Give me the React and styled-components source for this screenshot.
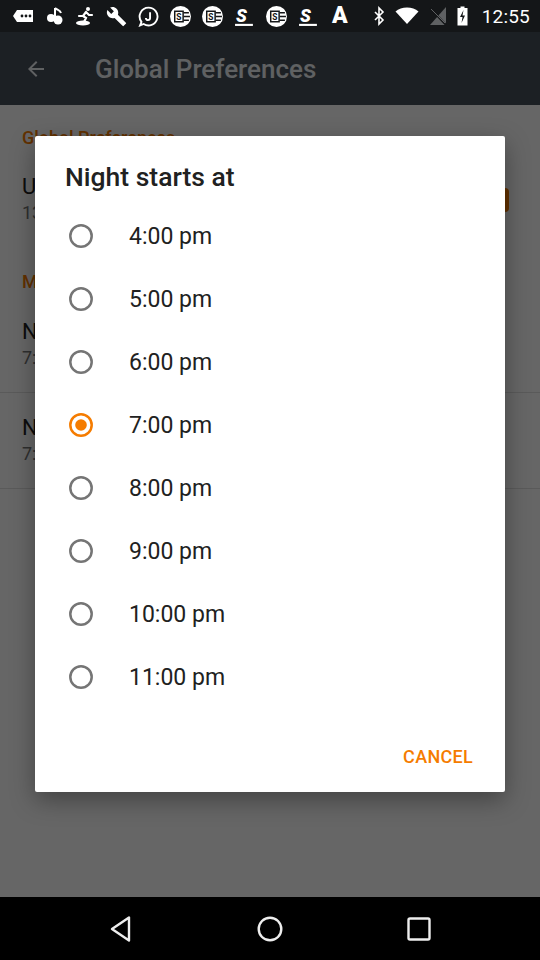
import React from "react";
import styled, { createGlobalStyle } from "styled-components";

const GlobalStyle = createGlobalStyle`
  html, body { margin: 0; padding: 0; background: #000; }
  body { font-family: Roboto, "Noto Sans", "Liberation Sans", sans-serif; }
  * { box-sizing: border-box; }
`;

const ORANGE = "#f57c00";

const Page = styled.div`
  position: relative;
  width: 540px;
  height: 960px;
  display: flex;
  flex-direction: column;
  overflow: hidden;
  background: #fff;
`;

const StatusBar = styled.div`
  height: 32px;
  background: #141618;
  display: flex;
  align-items: center;
  padding: 0 10px 0 13px;
  color: #fff;
  flex-shrink: 0;
`;

const StatusIcons = styled.div`
  display: flex;
  align-items: center;
  gap: 11px;
  flex: 1;
`;

const LetterIcon = styled.span`
  font-size: 23px;
  line-height: 24px;
  font-weight: 900;
  color: #fff;
  padding: 0 2px;
`;

const SysIcons = styled.div`
  display: flex;
  align-items: center;
  gap: 10px;
`;

const Clock = styled.span`
  font-size: 19px;
  font-weight: 400;
  color: #fff;
  margin-left: 4px;
  letter-spacing: 0.2px;
`;

const Main = styled.div`
  position: relative;
  flex: 1;
  display: flex;
  flex-direction: column;
`;

const AppBar = styled.div`
  height: 73px;
  background: #48505a;
  display: flex;
  align-items: center;
  padding-left: 24px;
  gap: 47px;
  flex-shrink: 0;
`;

const AppTitle = styled.div`
  font-size: 26px;
  font-weight: 500;
  color: #eef2f6;
`;

const Content = styled.div`
  flex: 1;
  background: #fff;
  display: flex;
  flex-direction: column;
`;

const SectionHeader = styled.div`
  padding: ${(p) => p.$top}px 22px 0;
  height: ${(p) => p.$h}px;
  font-size: 18px;
  line-height: 22px;
  font-weight: 500;
  color: ${ORANGE};
`;

const Item = styled.div`
  position: relative;
  padding: ${(p) => p.$top}px 22px 0;
  height: ${(p) => p.$h}px;
  border-bottom: ${(p) => (p.$divider ? "1px solid #e0e0e0" : "none")};
`;

const ItemTitle = styled.div`
  font-size: 22px;
  line-height: 24px;
  color: #212121;
`;

const ItemSub = styled.div`
  margin-top: 2px;
  font-size: 18px;
  line-height: 24px;
  color: #757575;
`;

const Check = styled.div`
  position: absolute;
  right: 31px;
  top: 17px;
  width: 22px;
  height: 24px;
  border-radius: 4px;
  background: ${ORANGE};
`;

const Scrim = styled.div`
  position: absolute;
  inset: 0;
  background: rgba(0, 0, 0, 0.6);
`;

const NavBar = styled.div`
  height: 63px;
  background: #000;
  display: flex;
  align-items: center;
  justify-content: space-around;
  padding: 0 47px;
  flex-shrink: 0;
`;

const Dialog = styled.div`
  position: absolute;
  left: 35px;
  top: 136px;
  width: 470px;
  height: 656px;
  background: #fff;
  border-radius: 2px;
  box-shadow: 0 8px 24px rgba(0, 0, 0, 0.35);
  display: flex;
  flex-direction: column;
  padding: 26px 0 18px;
`;

const DialogTitle = styled.div`
  padding: 0 30px;
  font-size: 26.5px;
  line-height: 30px;
  font-weight: 500;
  color: #212121;
`;

const OptionList = styled.div`
  margin-top: 12px;
  display: flex;
  flex-direction: column;
`;

const Option = styled.div`
  height: 63px;
  display: flex;
  align-items: center;
  padding-left: 34px;
  gap: 36px;
`;

const OptionLabel = styled.span`
  font-size: 23px;
  line-height: 26px;
  padding-top: 2px;
  color: #212121;
`;

const Actions = styled.div`
  margin-top: auto;
  display: flex;
  justify-content: flex-end;
  padding-right: 24px;
`;

const TextButton = styled.button`
  border: none;
  background: transparent;
  height: 36px;
  padding: 0 8px;
  font-family: inherit;
  font-size: 18px;
  font-weight: 500;
  color: ${ORANGE};
  letter-spacing: 0.3px;
`;

function Radio({ checked }) {
  const c = checked ? ORANGE : "#757575";
  return (
    <svg width="24" height="24" viewBox="0 0 24 24">
      <circle cx="12" cy="12" r="10.7" fill="none" stroke={c} strokeWidth="2.5" />
      {checked && <circle cx="12" cy="12" r="5.8" fill={c} />}
    </svg>
  );
}

const SE = () => (
  <svg width="21" height="21" viewBox="0 0 20 20">
    <circle cx="10" cy="10" r="10" fill="#fff" />
    <rect x="4.5" y="5" width="8" height="10" fill="none" stroke="#141618" strokeWidth="1.4" />
    <text x="6" y="13.5" fontSize="8" fontWeight="700" fill="#141618" fontFamily="Roboto, sans-serif">S</text>
    <path d="M13 6.5h5M13 10h6M13 13.5h5" stroke="#141618" strokeWidth="1.4" />
  </svg>
);

const BoldS = () => (
  <svg width="21" height="21" viewBox="0 0 20 20">
    <text x="2" y="15" fontSize="17" fontWeight="900" fontStyle="italic" fill="#fff" fontFamily="Roboto, sans-serif">S</text>
    <rect x="1" y="17" width="17" height="2" fill="#fff" />
  </svg>
);

function StatusLeft() {
  return (
    <StatusIcons>
      <svg width="22" height="20" viewBox="0 0 22 20">
        <path d="M4 4h16v12H4L0 10z" fill="#fff" />
        <circle cx="9" cy="10" r="1.4" fill="#141618" />
        <circle cx="13" cy="10" r="1.4" fill="#141618" />
        <circle cx="17" cy="10" r="1.4" fill="#141618" />
      </svg>
      <svg width="18" height="20" viewBox="0 0 18 20">
        <path d="M9 2v10" stroke="#fff" strokeWidth="2" />
        <path d="M9 2c2 2 5 2 6 5" stroke="#fff" strokeWidth="2" fill="none" />
        <circle cx="5" cy="12" r="4" fill="#fff" />
        <circle cx="12" cy="14" r="4.5" fill="#fff" />
      </svg>
      <svg width="20" height="20" viewBox="0 0 20 20">
        <circle cx="13" cy="3" r="2" fill="#fff" />
        <path d="M11 6l-3 4 3 2-2 4M11 6l3 3 3 0M8 10l-4 0" stroke="#fff" strokeWidth="2.2" fill="none" strokeLinecap="round" />
        <ellipse cx="8" cy="17" rx="7" ry="2.5" fill="#fff" />
      </svg>
      <svg width="21" height="21" viewBox="0 0 24 24">
        <path d="M22.7 19l-9.1-9.1c.9-2.3.4-5-1.5-6.9-2-2-5-2.4-7.4-1.3L9 6 6 9 1.6 4.7C.4 7.1.9 10.1 2.9 12.1c1.9 1.9 4.6 2.4 6.9 1.5l9.1 9.1c.4.4 1 .4 1.4 0l2.3-2.3c.5-.4.5-1.1.1-1.4z" fill="#fff" />
      </svg>
      <svg width="21" height="21" viewBox="0 0 20 20">
        <path d="M10 1.5a8.5 8.5 0 1 1-4.6 15.6L2 18.5l1.3-3.4A8.5 8.5 0 0 1 10 1.5z" fill="none" stroke="#fff" strokeWidth="1.8" />
        <path d="M11.5 6v5.5a2 2 0 0 1-4 0" fill="none" stroke="#fff" strokeWidth="1.8" />
      </svg>
      <SE />
      <SE />
      <BoldS />
      <SE />
      <BoldS />
      <LetterIcon>A</LetterIcon>
    </StatusIcons>
  );
}

function StatusRight() {
  return (
    <SysIcons>
      <svg width="12" height="20" viewBox="0 0 12 20">
        <path d="M2 6l8 8-4 4V2l4 4-8 8" fill="none" stroke="#fff" strokeWidth="1.6" />
      </svg>
      <svg width="24" height="20" viewBox="0 0 24 20">
        <path d="M12 18L0.5 5.5C3.5 2.8 7.5 1.5 12 1.5s8.5 1.3 11.5 4z" fill="#fff" />
      </svg>
      <svg width="18" height="20" viewBox="0 0 18 20">
        <path d="M17 1v18H1z" fill="#5f6163" />
        <path d="M1 2l16 17" stroke="#141618" strokeWidth="2" />
        <path d="M2 3l14 14" stroke="#5f6163" strokeWidth="1" />
      </svg>
      <svg width="11" height="20" viewBox="0 0 11 20">
        <rect x="3.5" y="0.5" width="4" height="2" fill="#fff" />
        <rect x="0.5" y="2" width="10" height="17.5" fill="#fff" />
        <path d="M6.5 4L3 11h2.5l-1 6L8 9.5H5.5z" fill="#141618" />
      </svg>
      <Clock>12:55</Clock>
    </SysIcons>
  );
}

const options = ["4:00 pm", "5:00 pm", "6:00 pm", "7:00 pm", "8:00 pm", "9:00 pm", "10:00 pm", "11:00 pm"];

export default function App() {
  return (
    <>
      <GlobalStyle />
      <Page>
        <StatusBar>
          <StatusLeft />
          <StatusRight />
        </StatusBar>
        <Main>
          <AppBar>
            <svg width="24" height="24" viewBox="0 0 24 24">
              <path d="M20 11H7.8l5.6-5.6L12 4l-8 8 8 8 1.4-1.4L7.8 13H20z" fill="#eef2f6" />
            </svg>
            <AppTitle>Global Preferences</AppTitle>
          </AppBar>
          <Content>
            <SectionHeader $top={22} $h={66}>Global Preferences</SectionHeader>
            <Item $top={4} $h={79}>
              <ItemTitle>Use location</ItemTitle>
              <ItemSub>13:00</ItemSub>
              <Check />
            </Item>
            <SectionHeader $top={21} $h={56}>Manual times</SectionHeader>
            <Item $top={14} $h={87} $divider>
              <ItemTitle>Night starts at</ItemTitle>
              <ItemSub>7:00 pm</ItemSub>
            </Item>
            <Item $top={23} $h={96} $divider>
              <ItemTitle>Night ends at</ItemTitle>
              <ItemSub>7:00 am</ItemSub>
            </Item>
          </Content>
          <Scrim />
        </Main>
        <NavBar>
          <svg width="24" height="28" viewBox="0 0 24 28">
            <path d="M20 2.5v23L3 14z" fill="none" stroke="#eee" strokeWidth="2.4" strokeLinejoin="round" />
          </svg>
          <svg width="26" height="26" viewBox="0 0 26 26">
            <circle cx="13" cy="13" r="11.3" fill="none" stroke="#eee" strokeWidth="2.4" />
          </svg>
          <svg width="24" height="24" viewBox="0 0 24 24">
            <rect x="1.5" y="1.5" width="21" height="21" rx="1.5" fill="none" stroke="#eee" strokeWidth="2.4" />
          </svg>
        </NavBar>
        <Dialog>
          <DialogTitle>Night starts at</DialogTitle>
          <OptionList>
            {options.map((o) => (
              <Option key={o}>
                <Radio checked={o === "7:00 pm"} />
                <OptionLabel>{o}</OptionLabel>
              </Option>
            ))}
          </OptionList>
          <Actions>
            <TextButton>CANCEL</TextButton>
          </Actions>
        </Dialog>
      </Page>
    </>
  );
}
